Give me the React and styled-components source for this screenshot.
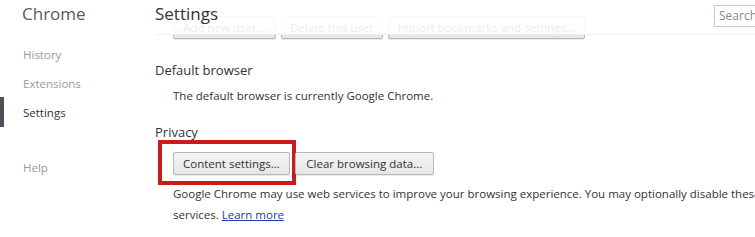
import React from "react";
import styled, { createGlobalStyle } from "styled-components";

const Global = createGlobalStyle`
  html, body { margin: 0; padding: 0; background: #fff; overflow: hidden; }
  body { font-family: "Open Sans", "Noto Sans", sans-serif; color: #333; }
`;

const Page = styled.div`
  display: flex;
  width: 900px;
  height: 237px;
  overflow: hidden;
`;

const Sidebar = styled.nav`
  width: 155px;
  flex-shrink: 0;
  display: flex;
  flex-direction: column;
`;

const Brand = styled.h1`
  margin: 0;
  padding: 2px 0 0 22px;
  height: 34px;
  font-size: 17px;
  font-weight: 400;
  line-height: 24px;
  color: #5a5a5a;
`;

const NavList = styled.ul`
  list-style: none;
  margin: 4px 0 0;
  padding: 0;
  display: flex;
  flex-direction: column;
`;

const NavItem = styled.li`
  position: relative;
  height: 29px;
  line-height: 29px;
  padding-left: 23px;
  font-size: 11.5px;
  color: ${(p) => (p.$active ? "#333" : "#999")};
  margin-top: ${(p) => (p.$gap ? "26px" : "0")};
  &::before {
    content: "";
    display: ${(p) => (p.$active ? "block" : "none")};
    position: absolute;
    left: 0;
    top: -1px;
    width: 4px;
    height: 30px;
    background: #4b5059;
  }
`;

const Main = styled.main`
  position: relative;
  flex: 1;
  display: flex;
  flex-direction: column;
`;

const Header = styled.header`
  position: absolute;
  top: 0;
  left: 0;
  right: 0;
  height: 34px;
  display: flex;
  align-items: flex-start;
  justify-content: space-between;
  padding-right: 20px;
  background: rgba(255, 255, 255, 0.9);
  border-bottom: 1px solid #eee;
  z-index: 2;
`;

const Title = styled.h1`
  margin: 0;
  padding-top: 2px;
  font-size: 17px;
  font-weight: 400;
  line-height: 24px;
  color: #333;
`;

const Search = styled.div`
  margin-top: 5px;
  width: 160px;
  height: 20px;
  border: 1px solid #c8c8c8;
  font-size: 12px;
  line-height: 20px;
  padding-left: 4px;
  color: #888;
`;

const Content = styled.div`
  padding-top: 16px;
  display: flex;
  flex-direction: column;
`;

const ButtonRow = styled.div`
  display: flex;
  gap: 5px;
  padding-left: 18px;
  margin-top: ${(p) => p.$top || 0}px;
`;

const Button = styled.button`
  position: relative;
  height: 23px;
  padding: 0 ${(p) => p.$pad || 9}px;
  font-family: inherit;
  font-size: 11.5px;
  color: #333;
  background: linear-gradient(#f4f4f4, #e6e6e6);
  border: 1px solid #b8b8b8;
  border-radius: 2px;
  box-shadow: 0 1px 0 rgba(0, 0, 0, 0.08);
  white-space: nowrap;
  flex-shrink: 0;
`;

const Highlight = styled.span`
  position: absolute;
  left: -16px;
  top: -13px;
  right: -7px;
  bottom: -11px;
  border: 4px solid #cc1b1e;
  pointer-events: none;
`;

const Section = styled.section`
  margin-top: ${(p) => p.$top}px;
  display: flex;
  flex-direction: column;
`;

const SectionTitle = styled.h3`
  margin: 0;
  font-size: 13px;
  font-weight: 400;
  line-height: 20px;
  color: #333;
`;

const Body = styled.div`
  padding-left: 18px;
  font-size: 11.5px;
  line-height: ${(p) => p.$lh || 18}px;
  color: #333;
  margin-top: ${(p) => p.$top || 0}px;
  white-space: nowrap;
`;

const Link = styled.a`
  color: #1a3fa5;
  text-decoration: underline;
`;

export default function App() {
  return (
    <Page>
      <Global />
      <Sidebar>
        <Brand>Chrome</Brand>
        <NavList>
          <NavItem>History</NavItem>
          <NavItem>Extensions</NavItem>
          <NavItem $active>Settings</NavItem>
          <NavItem $gap>Help</NavItem>
        </NavList>
      </Sidebar>
      <Main>
        <Header>
          <Title>Settings</Title>
          <Search>Search</Search>
        </Header>
        <Content>
          <ButtonRow>
            <Button $pad={9}>Add new user...</Button>
            <Button $pad={8.5}>Delete this user</Button>
            <Button $pad={8.5}>Import bookmarks and settings...</Button>
          </ButtonRow>
          <Section $top={21}>
            <SectionTitle>Default browser</SectionTitle>
            <Body $top={7}>The default browser is currently Google Chrome.</Body>
          </Section>
          <Section $top={17}>
            <SectionTitle>Privacy</SectionTitle>
            <ButtonRow $top={10}>
              <Button $pad={9}>
                Content settings...
                <Highlight />
              </Button>
              <Button $pad={10.5}>Clear browsing data...</Button>
            </ButtonRow>
            <Body $lh={21} $top={8}>
              Google Chrome may use web services to improve your browsing experience. You may optionally disable these
              <br />
              services. <Link href="#">Learn more</Link>
            </Body>
          </Section>
        </Content>
      </Main>
    </Page>
  );
}
